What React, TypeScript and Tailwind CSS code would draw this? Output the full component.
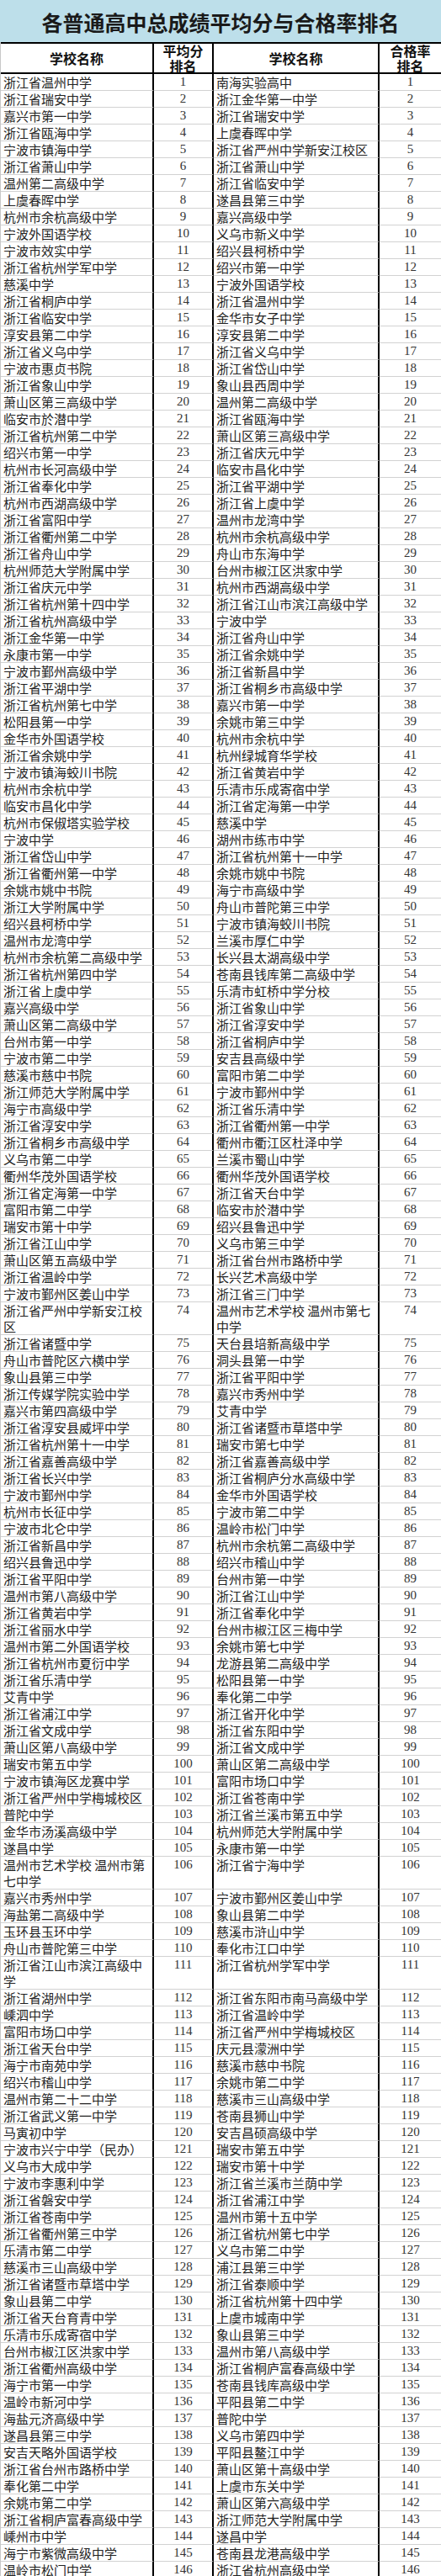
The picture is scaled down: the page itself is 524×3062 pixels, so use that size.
import React from 'react';

const avgRank = [
  '浙江省温州中学', '浙江省瑞安中学', '嘉兴市第一中学', '浙江省瓯海中学', '宁波市镇海中学',
  '浙江省萧山中学', '温州第二高级中学', '上虞春晖中学', '杭州市余杭高级中学', '宁波外国语学校',
  '宁波市效实中学', '浙江省杭州学军中学', '慈溪中学', '浙江省桐庐中学', '浙江省临安中学',
  '淳安县第二中学', '浙江省义乌中学', '宁波市惠贞书院', '浙江省象山中学', '萧山区第三高级中学',
  '临安市於潜中学', '浙江省杭州第二中学', '绍兴市第一中学', '杭州市长河高级中学', '浙江省奉化中学',
  '杭州市西湖高级中学', '浙江省富阳中学', '浙江省衢州第二中学', '浙江省舟山中学', '杭州师范大学附属中学',
  '浙江省庆元中学', '浙江省杭州第十四中学', '浙江省杭州高级中学', '浙江金华第一中学', '永康市第一中学',
  '宁波市鄞州高级中学', '浙江省平湖中学', '浙江省杭州第七中学', '松阳县第一中学', '金华市外国语学校',
  '浙江省余姚中学', '宁波市镇海蛟川书院', '杭州市余杭中学', '临安市昌化中学', '杭州市保俶塔实验学校',
  '宁波中学', '浙江省岱山中学', '浙江省衢州第一中学', '余姚市姚中书院', '浙江大学附属中学',
  '绍兴县柯桥中学', '温州市龙湾中学', '杭州市余杭第二高级中学', '浙江省杭州第四中学', '浙江省上虞中学',
  '嘉兴高级中学', '萧山区第二高级中学', '台州市第一中学', '宁波市第二中学', '慈溪市慈中书院',
  '浙江师范大学附属中学', '海宁市高级中学', '浙江省淳安中学', '浙江省桐乡市高级中学', '义乌市第二中学',
  '衢州华茂外国语学校', '浙江省定海第一中学', '富阳市第二中学', '瑞安市第十中学', '浙江省江山中学',
  '萧山区第五高级中学', '浙江省温岭中学', '宁波市鄞州区姜山中学', '浙江省严州中学新安江校区', '浙江省诸暨中学',
  '舟山市普陀区六横中学', '象山县第三中学', '浙江传媒学院实验中学', '嘉兴市第四高级中学', '浙江省淳安县威坪中学',
  '浙江省杭州第十一中学', '浙江省嘉善高级中学', '浙江省长兴中学', '宁波市鄞州中学', '杭州市长征中学',
  '宁波市北仑中学', '浙江省新昌中学', '绍兴县鲁迅中学', '浙江省平阳中学', '温州市第八高级中学',
  '浙江省黄岩中学', '浙江省丽水中学', '温州市第二外国语学校', '浙江省杭州市夏衍中学', '浙江省乐清中学',
  '艾青中学', '浙江省浦江中学', '浙江省文成中学', '萧山区第八高级中学', '瑞安市第五中学',
  '宁波市镇海区龙赛中学', '浙江省严州中学梅城校区', '普陀中学', '金华市汤溪高级中学', '遂昌中学',
  '温州市艺术学校 温州市第七中学', '嘉兴市秀州中学', '海盐第二高级中学', '玉环县玉环中学', '舟山市普陀第三中学',
  '浙江省江山市滨江高级中学', '浙江省湖州中学', '嵊泗中学', '富阳市场口中学', '浙江省天台中学',
  '海宁市南苑中学', '绍兴市稽山中学', '温州市第二十二中学', '浙江省武义第一中学', '马寅初中学',
  '宁波市兴宁中学（民办）', '义乌市大成中学', '宁波市李惠利中学', '浙江省磐安中学', '浙江省苍南中学',
  '浙江省衢州第三中学', '乐清市第二中学', '慈溪市三山高级中学', '浙江省诸暨市草塔中学', '象山县第二中学',
  '浙江省天台育青中学', '乐清市乐成寄宿中学', '台州市椒江区洪家中学', '浙江省衢州高级中学', '海宁市第一中学',
  '温岭市新河中学', '海盐元济高级中学', '遂昌县第三中学', '安吉天略外国语学校', '浙江省台州市路桥中学',
  '奉化第二中学', '余姚市第二中学', '浙江省桐庐富春高级中学', '嵊州市中学', '海宁市紫微高级中学',
  '温岭市松门中学',
];

const passRank = [
  '南海实验高中', '浙江金华第一中学', '浙江省瑞安中学', '上虞春晖中学', '浙江省严州中学新安江校区',
  '浙江省萧山中学', '浙江省临安中学', '遂昌县第三中学', '嘉兴高级中学', '义乌市新义中学',
  '绍兴县柯桥中学', '绍兴市第一中学', '宁波外国语学校', '浙江省温州中学', '金华市女子中学',
  '淳安县第二中学', '浙江省义乌中学', '浙江省岱山中学', '象山县西周中学', '温州第二高级中学',
  '浙江省瓯海中学', '萧山区第三高级中学', '浙江省庆元中学', '临安市昌化中学', '浙江省平湖中学',
  '浙江省上虞中学', '温州市龙湾中学', '杭州市余杭高级中学', '舟山市东海中学', '台州市椒江区洪家中学',
  '杭州市西湖高级中学', '浙江省江山市滨江高级中学', '宁波中学', '浙江省舟山中学', '浙江省余姚中学',
  '浙江省新昌中学', '浙江省桐乡市高级中学', '嘉兴市第一中学', '余姚市第三中学', '杭州市余杭中学',
  '杭州绿城育华学校', '浙江省黄岩中学', '乐清市乐成寄宿中学', '浙江省定海第一中学', '慈溪中学',
  '湖州市练市中学', '浙江省杭州第十一中学', '余姚市姚中书院', '海宁市高级中学', '舟山市普陀第三中学',
  '宁波市镇海蛟川书院', '兰溪市厚仁中学', '长兴县太湖高级中学', '苍南县钱库第二高级中学', '乐清市虹桥中学分校',
  '浙江省象山中学', '浙江省淳安中学', '浙江省桐庐中学', '安吉县高级中学', '富阳市第二中学',
  '宁波市鄞州中学', '浙江省乐清中学', '浙江省衢州第一中学', '衢州市衢江区杜泽中学', '兰溪市蜀山中学',
  '衢州华茂外国语学校', '浙江省天台中学', '临安市於潜中学', '绍兴县鲁迅中学', '义乌市第三中学',
  '浙江省台州市路桥中学', '长兴艺术高级中学', '浙江省三门中学', '温州市艺术学校 温州市第七中学', '天台县培新高级中学',
  '洞头县第一中学', '浙江省平阳中学', '嘉兴市秀州中学', '艾青中学', '浙江省诸暨市草塔中学',
  '瑞安市第七中学', '浙江省嘉善高级中学', '浙江省桐庐分水高级中学', '金华市外国语学校', '宁波市第二中学',
  '温岭市松门中学', '杭州市余杭第二高级中学', '绍兴市稽山中学', '台州市第一中学', '浙江省江山中学',
  '浙江省奉化中学', '台州市椒江区三梅中学', '余姚市第七中学', '龙游县第二高级中学', '松阳县第一中学',
  '奉化第二中学', '浙江省开化中学', '浙江省东阳中学', '浙江省文成中学', '萧山区第二高级中学',
  '富阳市场口中学', '浙江省苍南中学', '浙江省兰溪市第五中学', '杭州师范大学附属中学', '永康市第一中学',
  '浙江省宁海中学', '宁波市鄞州区姜山中学', '象山县第二中学', '慈溪市浒山中学', '奉化市江口中学',
  '浙江省杭州学军中学', '浙江省东阳市南马高级中学', '浙江省温岭中学', '浙江省严州中学梅城校区', '庆元县濛洲中学',
  '慈溪市慈中书院', '余姚市第二中学', '慈溪市三山高级中学', '苍南县狮山中学', '安吉昌硕高级中学',
  '瑞安市第五中学', '瑞安市第十中学', '浙江省兰溪市兰荫中学', '浙江省浦江中学', '温州市第十五中学',
  '浙江省杭州第七中学', '义乌市第二中学', '浦江县第三中学', '浙江省泰顺中学', '浙江省杭州第十四中学',
  '上虞市城南中学', '象山县第三中学', '温州市第八高级中学', '浙江省桐庐富春高级中学', '苍南县钱库高级中学',
  '平阳县第二中学', '普陀中学', '义乌市第四中学', '平阳县鳌江中学', '萧山区第十高级中学',
  '上虞市东关中学', '萧山区第六高级中学', '浙江师范大学附属中学', '遂昌中学', '苍南县龙港高级中学',
  '浙江省杭州高级中学',
];

const cjk = "font-['Noto_Sans_CJK_SC',sans-serif]";
const nameCell = `${cjk} border-b border-r-2 border-b-[#d2d2d2] border-r-black pl-[3px] pr-[2px] text-[15px] leading-[19px] text-[#222]`;
const rankCell = "font-['Liberation_Serif',serif] border-b border-b-[#d2d2d2] text-center text-[15px] leading-[19px] text-[#333]";
const headCell = `${cjk} flex h-[38px] items-center justify-center border-y-2 border-black text-[16px] font-bold text-[#111]`;

const RankingTable: React.FC = () => {
  return (
    <div className="w-[524px] bg-white">
      <div className="flex h-[50px] items-center justify-center bg-[#bddfea] pt-[2px]">
        <h1 className={`${cjk} text-[25px] font-bold leading-[36px] text-[#1a1a1a]`}>
          各普通高中总成绩平均分与合格率排名
        </h1>
      </div>

      <div className="grid grid-cols-[182px_71px_197px_1fr] border-l border-l-[#c8c8c8]">
        {/* header */}
        <div className={`${headCell} border-r-2`}>学校名称</div>
        <div className={`${headCell} border-r-2 text-center leading-[18px]`}>
          平均分
          <br />
          排名
        </div>
        <div className={`${headCell} border-r-2`}>学校名称</div>
        <div className={`${headCell} text-center leading-[18px]`}>
          合格率
          <br />
          排名
        </div>

        {avgRank.map((name, i) => (
          <React.Fragment key={i}>
            <div className={nameCell}>{name}</div>
            <div className={`${rankCell} border-r-2 border-r-black`}>{i + 1}</div>
            <div className={nameCell}>{passRank[i]}</div>
            <div className={rankCell}>{i + 1}</div>
          </React.Fragment>
        ))}
      </div>
    </div>
  );
};

export default function App() {
  return <RankingTable />;
}
